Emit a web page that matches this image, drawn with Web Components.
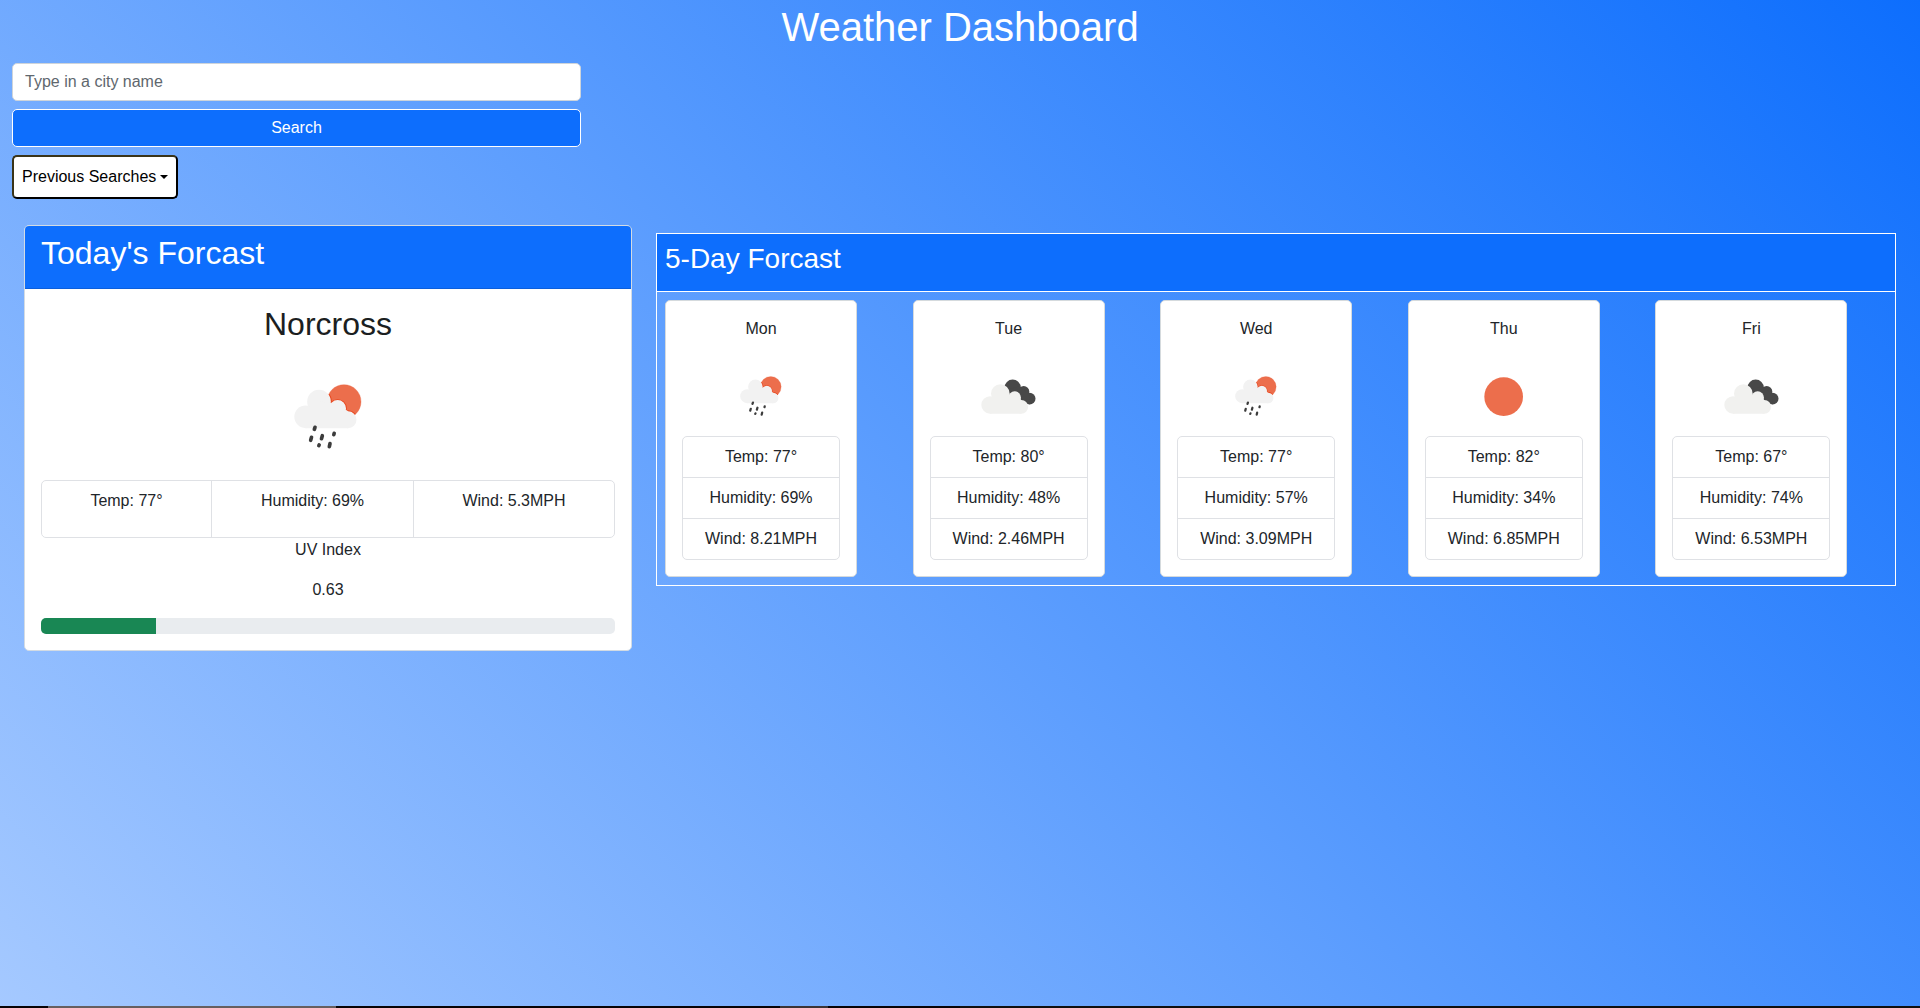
<!DOCTYPE html>
<html lang="en">
<head>
<meta charset="utf-8">
<title>Weather Dashboard</title>
<style>
  html { height: 100%; }
  body {
    margin: 0; height: 100%; overflow: hidden;
    font: 16px/24px "Liberation Sans", Arial, sans-serif; color: #212529;
    background: linear-gradient(45deg, #a5c9ff, #0d6efd);
  }
</style>
</head>
<body>
<weather-app></weather-app>
<script>
const define = (name, html, setup) => {
  const template = document.createElement('template');
  template.innerHTML = html;
  customElements.define(name, class extends HTMLElement {
    connectedCallback() {
      if (this.shadowRoot) return;
      this.attachShadow({ mode: 'open' }).append(template.content.cloneNode(true));
      if (setup) setup(this, this.shadowRoot);
    }
  });
};

const icons = {
  rain: { box: '43 40 204 196', w: 204, h: 196, art: `
    <circle cx="193" cy="93" r="51" fill="#ec6e4c" stroke="#ea5c38" stroke-width="1"/>
    <g stroke="#e8451c" stroke-width="5"><clipPath id="s"><circle cx="193" cy="93" r="51"/></clipPath>
      <g clip-path="url(#s)"><circle cx="118" cy="93" r="36"/><circle cx="174" cy="113" r="25"/><circle cx="205" cy="147" r="26"/></g></g>
    <g fill="#f2f2f2"><circle cx="118" cy="93" r="35.500"/><circle cx="174" cy="113" r="25"/><circle cx="205" cy="147" r="25.500"/><circle cx="78" cy="138.500" r="34"/>
      <path d="M78 172.500V138L105 90L174 100L205 122V172.500Z"/></g>
    <path d="M106 170L104 176M95.500 200L93 209M128 195L125.500 204M118.500 222.500L117.500 225M163.500 188L162.500 192M151 219L149 228" stroke="#3c3c3c" stroke-width="11" stroke-linecap="round"/>` },
  clouds: { box: '35 28 165 106', w: 165, h: 106, art: `
    <g fill="#484848"><circle cx="130" cy="54" r="24.500"/><circle cx="163" cy="66" r="17"/><circle cx="181" cy="87" r="17.500"/><path d="M112 60L150 50L180 72L182 104L150 98Z"/></g>
    <g fill="#f1f1ef"><circle cx="93" cy="72" r="28"/><circle cx="136" cy="84" r="19"/><circle cx="156" cy="111.500" r="20.500"/><circle cx="62" cy="106" r="26"/><path d="M62 132V106L80 74L136 75L156 91V132Z"/></g>` },
  sun: { box: '0 0 118 118', w: 118, h: 118, art: `<circle cx="59" cy="59" r="58" fill="#ec6e4c"/>` }
};

define('weather-icon', `<style>:host{display:flex;justify-content:center}svg{display:block}</style>`, (el, root) => {
  const i = icons[el.getAttribute('kind')], s = (+el.getAttribute('scale') || 1) / 3;
  root.innerHTML += `<svg width="${i.w * s}" height="${i.h * s}" viewBox="${i.box}" fill="none">${i.art}</svg>`;
});

define('search-panel', `<style>
  :host{display:flex;flex-direction:column;align-items:flex-start;gap:8px;width:569px;padding:0 12px}
  input,button{box-sizing:border-box;font:inherit;margin:0}
  input{width:100%;height:38px;padding:6px 12px;border:1px solid #ced4da;border-radius:5px;background:#fff}
  input::placeholder{color:#5f676e;opacity:1}
  .go{width:100%;height:38px;border:1px solid #fff;border-radius:5px;background:#0d6efd;color:#fff}
  .prev{display:flex;align-items:center;gap:4px;height:44px;padding:0 8px;border:2px solid;border-color:#3a3418 #000 #000 #3a3418;border-radius:5px;background:#fff;color:#000}
  i{border:4.800px solid transparent;border-top-color:#000;border-bottom:0}
</style>
<input placeholder="Type in a city name"><button class="go">Search</button><button class="prev">Previous Searches<i></i></button>`);

define('today-card', `<style>
  :host{box-sizing:border-box;display:flex;flex-direction:column;width:608px;border:1px solid #d3dbe3;border-radius:5px;background:#fff;overflow:hidden}
  header{height:46.400px;padding:8px 16px;background:#0d6efd;border-bottom:1px solid #0b5fdc;color:#fff}
  h2{margin:0;font-size:32px;font-weight:400;line-height:38.400px}
  .body{display:flex;flex-direction:column;padding:16px;text-align:center}
  .body h2{color:#1b1e21}
  weather-icon{height:96px;padding-top:32px}
  .stats{box-sizing:border-box;display:flex;height:58px;border:1px solid #dfe1e5;border-radius:5px}
  .stats div{box-sizing:border-box;padding-top:8px;width:202px}
  .stats div+div{border-left:1px solid #dfe1e5}
  .stats div:first-child{width:169px}.stats div:last-child{flex:1}
  p{margin:0 0 16px}
  .bar{height:16px;border-radius:5px;background:#e9ecef;overflow:hidden}
  .fill{width:20%;height:100%;background:#198754}
</style>
<header><h2>Today's Forcast</h2></header>
<div class="body"><h2>Norcross</h2><weather-icon kind="rain" style="margin-top:8px"></weather-icon>
<div class="stats"><div>Temp: 77°</div><div>Humidity: 69%</div><div>Wind: 5.3MPH</div></div>
<p>UV Index</p><p>0.63</p><div class="bar"><div class="fill"></div></div></div>`);

define('day-card', `<style>
  :host{box-sizing:border-box;display:block;width:192px;height:277px;padding:16px;border:1px solid #d5dadd;border-radius:5px;background:#fff;text-align:center}
  .pic{box-sizing:border-box;height:95px}
  .list{border:1px solid #dfe1e5;border-radius:5px}
  .list div{padding:8px 0}.list div+div{border-top:1px solid #dfe1e5}
</style><div><slot></slot></div><div class="pic"></div><div class="list"></div>`, (el, root) => {
  const [kind, t, h, w] = el.dataset.day.split(' ');
  const top = { rain: 34.800, clouds: 38, sun: 36 }[kind], scale = kind === 'rain' ? .615 : 1;
  root.querySelector('.pic').style.paddingTop = top + 'px';
  root.querySelector('.pic').innerHTML = `<weather-icon kind="${kind}" scale="${scale}"></weather-icon>`;
  root.querySelector('.list').innerHTML = `<div>Temp: ${t}°</div><div>Humidity: ${h}%</div><div>Wind: ${w}MPH</div>`;
});

define('five-day', `<style>
  :host{box-sizing:border-box;display:block;width:1240px;border:1px solid #fff}
  header{box-sizing:border-box;height:58px;padding:8px;background:#0d6efd;border-bottom:1px solid #fff;color:#fff}
  h3{margin:0;font-size:28px;font-weight:400;line-height:33.600px}
  .days{display:grid;grid-template-columns:repeat(5,1fr);padding:8px 0;height:277px}
  day-card{margin-left:8px}
</style><header><h3>5-Day Forcast</h3></header>
<div class="days"><day-card data-day="rain 77 69 8.21">Mon</day-card><day-card data-day="clouds 80 48 2.46">Tue</day-card><day-card data-day="rain 77 57 3.09">Wed</day-card><day-card data-day="sun 82 34 6.85">Thu</day-card><day-card data-day="clouds 67 74 6.53">Fri</day-card></div>`);

define('weather-app', `<style>
  :host{display:flex;flex-direction:column;height:100%}
  h1{margin:3px 0 12px;text-align:center;color:#fff;font-size:40px;font-weight:400;line-height:48px}
  main{display:flex;align-items:flex-start;gap:24px;padding:26px 24px 0;flex:1}
  five-day{margin-top:8px}
  footer{height:2px;display:flex;background:linear-gradient(90deg,#080406 50%,#101010 50%)}
  footer i:nth-child(1){width:288px;margin-left:48px;background:#665f60}
  footer i:nth-child(2){width:48px;margin-left:444px;background:#3b3436}
</style>
<h1>Weather Dashboard</h1><search-panel></search-panel>
<main><today-card></today-card><five-day></five-day></main>
<footer><i></i><i></i></footer>`);
</script>
</body>
</html>
